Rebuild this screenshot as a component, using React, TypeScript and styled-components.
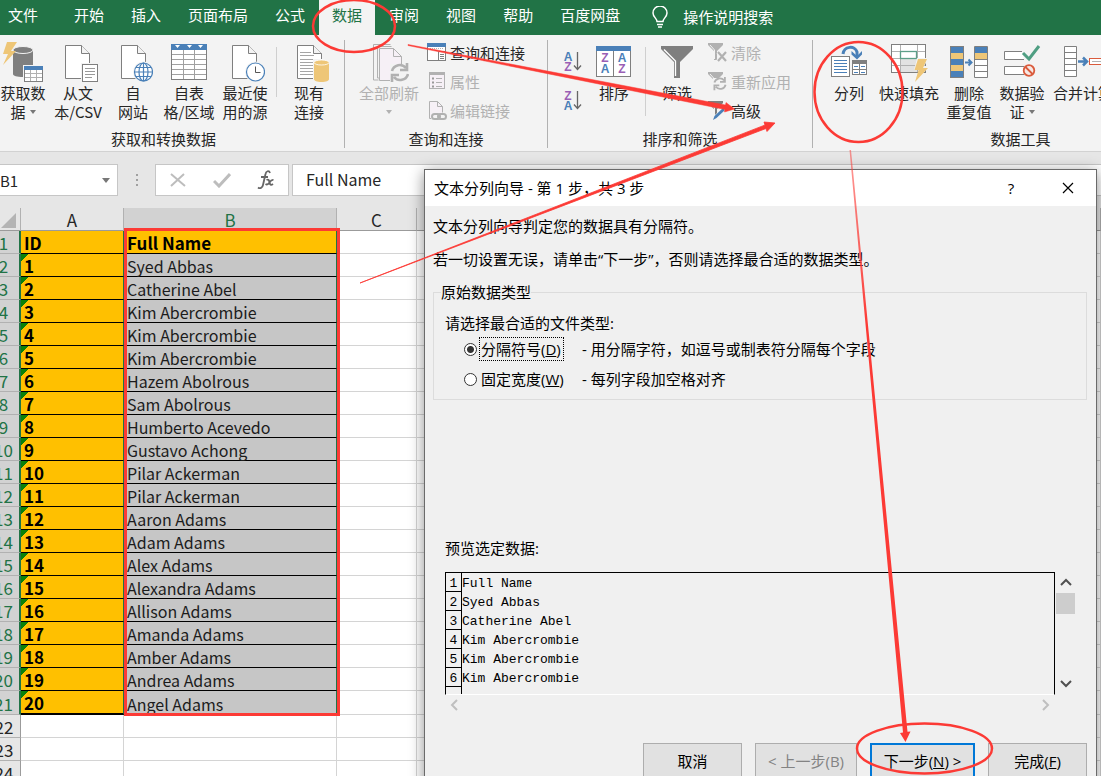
import React from "react";
import styled, { createGlobalStyle } from "styled-components";

const GREEN = "#217346";
const BLUE = "#4a80b8";
const GRAY = "#7f7f7f";
const MUTED = "#b1b1b1";
const SAND = "#eec677";
const MARK = "#fc3a35";

const Global = createGlobalStyle`
  * { box-sizing: border-box; }
  body {
    margin: 0;
    font-family: "Noto Sans CJK SC", "Noto Sans", sans-serif;
    font-size: 15px;
    color: #262626;
  }
  button, input { font: inherit; color: inherit; }
`;

const Window = styled.div`
  position: relative;
  height: 100vh;
  overflow: hidden;
  display: flex;
  flex-direction: column;
  background: #e6e6e6;
`;

/* ---------- Ribbon tabs ---------- */

const TabBar = styled.nav`
  display: flex;
  flex: none;
  gap: 1px;
  height: 35px;
  background: ${GREEN};
`;

const Tab = styled.button<{ $active?: boolean; $file?: boolean }>`
  flex: none;
  border: 0;
  padding: ${(p) => (p.$file ? "0 22px 5px 8px" : "0 13px 5px")};
  line-height: 30px;
  background: ${(p) => (p.$active ? "#f3f3f3" : "transparent")};
  color: ${(p) => (p.$active ? GREEN : "#fff")};
`;

const TellMe = styled.button`
  display: flex;
  align-items: center;
  flex: none;
  gap: 14px;
  margin-left: 17px;
  border: 0;
  padding: 0 0 2px;
  background: transparent;
  color: #fff;
`;

/* ---------- Ribbon body ---------- */

const Ribbon = styled.div`
  display: flex;
  flex: none;
  padding: 5px 0 3px;
  background: #f3f3f3;
  border-bottom: 1px solid #d2d2d2;
`;

const GroupBox = styled.section<{ $width: number; $bleed?: number }>`
  display: flex;
  flex-direction: column;
  flex: none;
  width: ${(p) => p.$width}px;
  margin-left: ${(p) => -(p.$bleed ?? 0)}px;
  border-right: 1px solid ${MUTED};
`;

const GroupItems = styled.div<{ $start: number }>`
  display: flex;
  height: 90px;
  padding-left: ${(p) => p.$start}px;
`;

const GroupTitle = styled.h2`
  margin: 0;
  font-size: 15px;
  font-weight: 400;
  line-height: 18px;
  text-align: center;
`;

const BigButton = styled.button<{ $width: number }>`
  display: flex;
  flex-direction: column;
  align-items: center;
  flex: none;
  width: ${(p) => p.$width}px;
  padding: 2px 0 0;
  border: 0;
  background: transparent;
  line-height: 19px;
  white-space: nowrap;
  &:disabled { color: ${MUTED}; }
`;

const BigIcon = styled.svg`
  flex: none;
  width: 40px;
  height: 40px;
  margin-bottom: 1px;
`;

const Line = styled.span`
  display: flex;
  align-items: center;
  gap: 4px;
  height: 19px;
`;

const Caret = styled.span`
  border: 3px solid transparent;
  border-top: 4px solid #777;
  border-bottom: 0;
  button:disabled & { border-top-color: ${MUTED}; }
`;

const Divider = styled.span<{ $tall?: boolean }>`
  flex: none;
  width: 1px;
  height: ${(p) => (p.$tall ? 69 : 50)}px;
  margin: 7px 8px 0;
  background: #cfcfcf;
`;

const Stack = styled.div<{ $start: number }>`
  display: flex;
  flex-direction: column;
  margin-left: ${(p) => p.$start}px;
`;

const SmallStack = styled(Stack)`
  margin-top: -2px;
`;

const SmallButton = styled.button`
  display: flex;
  align-items: center;
  gap: 3px;
  height: 29px;
  padding: 0;
  border: 0;
  background: transparent;
  white-space: nowrap;
  &:disabled { color: ${MUTED}; }
`;

const SmallIcon = styled.svg`
  flex: none;
  width: 20px;
  height: 20px;
`;

const OrderButton = styled.button`
  display: flex;
  align-items: center;
  height: 39px;
  padding: 4px 0 0;
  border: 0;
  background: transparent;
`;

/* ---------- Formula bar ---------- */

const FormulaBar = styled.div`
  display: flex;
  flex: none;
  height: 56px;
  padding-top: 12px;
`;

const NameBox = styled.div`
  display: flex;
  align-items: center;
  justify-content: space-between;
  width: 130px;
  height: 32px;
  margin-left: -12px;
  padding: 0 7px 0 11px;
  background: #fff;
  border: 1px solid #c6c6c6;
`;

const NameInput = styled.input`
  width: 80px;
  padding: 0;
  border: 0;
  outline: 0;
  background: transparent;
  font-size: 15px;
`;

const NameCaret = styled.span`
  border: 4px solid transparent;
  border-top: 5px solid #777;
  border-bottom: 0;
`;

const Grip = styled.span`
  width: 37px;
  height: 32px;
  display: flex;
  flex-direction: column;
  align-items: center;
  justify-content: center;
  gap: 3px;
  i { width: 2px; height: 2px; background: #a0a0a0; }
`;

const FormulaTools = styled.div`
  display: flex;
  align-items: center;
  justify-content: space-around;
  width: 134px;
  height: 32px;
  margin-right: 3px;
  background: #fff;
  border: 1px solid #c6c6c6;
`;

const ToolButton = styled.button`
  display: flex;
  padding: 0;
  border: 0;
  background: transparent;
`;

const FormulaInput = styled.input`
  flex: 1;
  height: 32px;
  padding: 0 13px 2px;
  border: 1px solid #c6c6c6;
  border-right: 0;
  outline: 0;
  background: #fff;
  font-size: 16px;
`;

/* ---------- Sheet ---------- */

const Sheet = styled.table`
  flex: none;
  width: calc(100% + 12px);
  margin-left: -12px;
  table-layout: fixed;
  border-collapse: separate;
  border-spacing: 0;
  font-size: 16px;
  line-height: 20px;
  background: #fff;
  td, th { height: 23px; padding: 2px 0 0; white-space: nowrap; }
`;

const Col = styled.col<{ $width?: number }>`
  width: ${(p) => (p.$width ? `${p.$width}px` : "auto")};
`;

const ColHead = styled.th<{ $on?: boolean }>`
  font-size: 17px;
  font-weight: 400;
  color: ${(p) => (p.$on ? GREEN : "#262626")};
  background: ${(p) => (p.$on ? "#d2d2d2" : "#e6e6e6")};
  border-right: 1px solid ${MUTED};
  border-bottom: 1px solid #9b9b9b;
`;

const RowHead = styled.th<{ $on?: boolean }>`
  font-size: 17px;
  font-weight: 400;
  color: ${(p) => (p.$on ? GREEN : "#262626")};
  background: ${(p) => (p.$on ? "#d2d2d2" : "#e6e6e6")};
  border-right: ${(p) => (p.$on ? `2px solid ${GREEN}` : "1px solid #9b9b9b")};
  border-bottom: 1px solid ${MUTED};
`;

const CornerMark = styled.span`
  display: block;
  width: 0;
  height: 0;
  margin: 0 4px 0 auto;
  border-bottom: 15px solid #b4b4b4;
  border-left: 15px solid transparent;
`;

const Cell = styled.td`
  border-right: 1px solid #d4d4d4;
  border-bottom: 1px solid #d4d4d4;
`;

const IdCell = styled(Cell)<{ $flag?: boolean; $last?: boolean }>`
  && { padding-left: 3px; }
  font-size: 17px;
  font-weight: 700;
  color: #000;
  background: ${(p) =>
    p.$flag ? "linear-gradient(135deg, #0a800a 5px, #ffc000 5px)" : "#ffc000"};
  border-right-color: ${GREEN};
  border-bottom: ${(p) => (p.$last ? 2 : 1)}px solid #000;
`;

const NameCell = styled(Cell)<{ $head?: boolean }>`
  && { padding-left: 3px; }
  font-size: ${(p) => (p.$head ? 17 : 16)}px;
  font-weight: ${(p) => (p.$head ? 700 : 400)};
  color: ${(p) => (p.$head ? "#000" : "#1c1c1c")};
  background: ${(p) => (p.$head ? "#ffc000" : "#c6c6c6")};
  border-right-color: ${GREEN};
  border-bottom-color: #000;
`;

/* ---------- Dialog ---------- */

const Dialog = styled.form`
  position: absolute;
  top: 169px;
  left: 424px;
  right: 4px;
  height: 640px;
  border: 1px solid #6a6a6a;
  background: #f0f0f0;
  color: #000;
  font-family: "Open Sans", "Noto Sans CJK SC", sans-serif;
  line-height: 22px;
  box-shadow: 0 3px 14px rgba(0, 0, 0, 0.45);
`;

const TitleBar = styled.header`
  display: flex;
  align-items: center;
  height: 36px;
  padding: 0 20px 0 9px;
  background: #fff;
`;

const DialogTitle = styled.h1`
  flex: 1;
  margin: 0;
  font-size: 15px;
  font-weight: 400;
`;

const TitleButton = styled.button`
  display: flex;
  align-items: center;
  justify-content: center;
  width: 16px;
  height: 20px;
  margin-left: 41px;
  padding: 0;
  border: 0;
  background: transparent;
`;

const DialogBody = styled.div`
  display: flex;
  flex-direction: column;
  padding: 9px 9px 0 8px;
`;

const Text = styled.p`
  margin: 0 0 11px;
`;

const TypeBox = styled.fieldset`
  margin: 0;
  padding: 9px 11px 5px;
  border: 1px solid #dcdcdc;
`;

const Legend = styled.legend`
  margin-left: -4px;
  padding: 0;
`;

const Question = styled.p`
  margin: 0;
`;

const Choice = styled.div`
  display: flex;
  align-items: center;
  height: 30px;
  padding-left: 19px;
`;

const Radio = styled.input`
  appearance: none;
  width: 13px;
  height: 13px;
  margin: 0 2px 0 0;
  border: 1px solid #333;
  border-radius: 50%;
  background: #fff;
  &:checked { background: radial-gradient(circle, #333 3px, #fff 4px); }
`;

const ChoiceLabel = styled.label<{ $focus?: boolean }>`
  width: 85px;
  margin-right: 18px;
  padding: 0 1px;
  border: 1px dotted ${(p) => (p.$focus ? "#000" : "transparent")};
  white-space: nowrap;
`;

const PreviewLabel = styled.h2`
  margin: 137px 0 13px 12px;
  font-size: 15px;
  font-weight: 400;
`;

const PreviewArea = styled.div`
  display: grid;
  grid-template-columns: 1fr 20px;
  grid-template-rows: 123px 19px;
  margin: 0 12px;
`;

const PreviewBox = styled.div`
  overflow: hidden;
  border: 1px solid #000;
  border-bottom-color: #fff;
`;

const PreviewTable = styled.table`
  border-collapse: separate;
  border-spacing: 0;
  font-family: "Liberation Mono", "Noto Sans CJK SC", monospace;
  font-size: 13px;
  td, th { height: 19px; font-weight: 400; white-space: pre; vertical-align: top; }
  td { padding: 3px 0 0; line-height: 16px; }
  th {
    width: 16px;
    padding: 4px 0 0;
    line-height: 14px;
    border-right: 1px solid #000;
    border-bottom: 1px solid #000;
  }
`;

const VerticalBar = styled.div`
  display: flex;
  flex-direction: column;
  align-items: center;
  padding: 1px 0 2px 1px;
`;

const HorizontalBar = styled.div`
  display: flex;
  justify-content: space-between;
`;

const ArrowButton = styled.button`
  display: flex;
  align-items: center;
  justify-content: center;
  width: 20px;
  height: 20px;
  padding: 0;
  border: 0;
  background: transparent;
`;

const Thumb = styled.span`
  width: 19px;
  height: 21px;
  background: #cdcdcd;
`;

const Spacer = styled.span`
  flex: 1;
`;

const Actions = styled.div`
  display: flex;
  justify-content: flex-end;
  gap: 13px;
  margin-top: 29px;
`;

const ActionButton = styled.button<{ $width: number; $primary?: boolean }>`
  width: ${(p) => p.$width}px;
  height: 36px;
  padding: 0;
  border: ${(p) => (p.$primary ? "2px solid #0078d7" : "1px solid #adadad")};
  background: #e1e1e1;
  white-space: nowrap;
  &:disabled { color: #838383; }
`;

const Markup = styled.svg`
  position: absolute;
  inset: 0;
  width: 100%;
  height: 100%;
  pointer-events: none;
`;

/* ---------- Icon parts ---------- */

const Page = ({ x, fill = "#fff", stroke = GRAY }: { x: number; fill?: string; stroke?: string }) => (
  <g fill={fill} stroke={stroke}>
    <path d={`M${x + 0.5} 3.5h16l8 8v25h-24z`} />
    <path d={`M${x + 16.5} 3.5v8h8`} fill="#f3f3f3" />
  </g>
);

const GetDataIcon = () => (
  <BigIcon viewBox="0 0 40 40" aria-hidden="true">
    <path d="M10 7v25c0 2 4 3 10 3s10-1 10-3V7z" fill={GRAY} />
    <ellipse cx="20" cy="8" rx="10" ry="3.5" fill={GRAY} stroke="#f3f3f3" />
    <path d="M4 0h10L8 9h5L0 23l5-11H0z" fill={SAND} />
    <rect x="20" y="23" width="20" height="17" fill="#f3f3f3" />
    <rect x="21.500" y="24.500" width="18" height="15" fill="#fff" stroke={GRAY} />
    <path d="M21 24h19v4H21z" fill={BLUE} />
    <path d="M27.500 28v11M33.500 28v11M22 31.500h17M22 35.500h17" stroke={MUTED} />
  </BigIcon>
);

const TextFileIcon = () => (
  <BigIcon viewBox="0 0 40 40" aria-hidden="true">
    <Page x={7} />
    <rect x="23" y="21" width="17" height="19" fill="#f3f3f3" />
    <rect x="24.500" y="22.500" width="15" height="17" fill="#fff" stroke={GRAY} />
    <path d="M27 26.500h10M27 29.500h10M27 32.500h10M27 35.500h7" stroke="#999" />
  </BigIcon>
);

const WebIcon = () => (
  <BigIcon viewBox="0 0 40 40" aria-hidden="true">
    <Page x={8} />
    <circle cx="30.500" cy="30" r="10.500" fill="#f3f3f3" />
    <g fill="none" stroke={BLUE} strokeWidth="1.200">
      <circle cx="30.500" cy="30" r="9" fill="#fff" />
      <ellipse cx="30.500" cy="30" rx="4.500" ry="9" />
      <path d="M30.500 21v18M21.500 30h18M23 25.500h15M23 34.500h15" />
    </g>
  </BigIcon>
);

const TableIcon = () => (
  <BigIcon viewBox="0 0 40 40" aria-hidden="true">
    <rect x="2.500" y="2.500" width="35" height="35" fill="#fff" stroke={GRAY} />
    <path d="M2 2h36v6H2z" fill={BLUE} />
    <path d="M6 3h5l-2.500 3zM18 3h5l-2.500 3zM29 3h5l-2.500 3z" fill="#fff" />
    <path d="M14.500 8v29M25.500 8v29M3 12.500h34M3 17.500h34M3 22.500h34M3 27.500h34M3 32.500h34" stroke="#a0a0a0" />
  </BigIcon>
);

const RecentIcon = () => (
  <BigIcon viewBox="0 0 40 40" aria-hidden="true">
    <Page x={7} />
    <circle cx="30.500" cy="30" r="10.500" fill="#f3f3f3" />
    <circle cx="30.500" cy="30" r="9" fill="#fff" stroke={BLUE} strokeWidth="1.200" />
    <path d="M30.500 24.500v6h5" fill="none" stroke="#555" />
  </BigIcon>
);

const ExistingIcon = () => (
  <BigIcon viewBox="0 0 40 40" aria-hidden="true">
    <Page x={8} />
    <path d="M11 10.500h11M11 13.500h14M11 17.500h18M11 20.500h14M11 23.500h13M11 26.500h13M11 29.500h13M11 32.500h13" stroke="#a5a5a5" />
    <path d="M24 17h17v23H24z" fill="#f3f3f3" />
    <path d="M25 20v17c0 2 3 3 7.500 3s7.500-1 7.500-3V20z" fill={SAND} />
    <ellipse cx="32.500" cy="20.500" rx="7.500" ry="2.500" fill={SAND} stroke="#fff" strokeWidth="0.800" />
  </BigIcon>
);

const Refresh = () => (
  <g fill="none" stroke={MUTED} strokeWidth="2.600">
    <path d="M2 8a8 8 0 0 1 14-3M17 0v7h-7M18 11a8 8 0 0 1-14 3M2 19v-7h7" />
  </g>
);

const RefreshAllIcon = () => (
  <BigIcon viewBox="0 0 40 40" aria-hidden="true">
    <path d="M9.500 38H4.500V2.500h17M13 36H8.500V4.500h14" fill="none" stroke={MUTED} />
    <path d="M10.500 6.500h14l8 8v24h-22z" fill="#f6f0f6" stroke={MUTED} />
    <path d="M24.500 6.500v8h8" fill="none" stroke={MUTED} />
    <rect x="21" y="22" width="19" height="18" fill="#f3f3f3" />
    <g transform="translate(21 21)"><Refresh /></g>
  </BigIcon>
);

const QueriesIcon = () => (
  <SmallIcon viewBox="0 0 20 20" aria-hidden="true">
    <rect x="0.500" y="0.500" width="18" height="17" fill="#fff" stroke={GRAY} />
    <path d="M0 0h19v4H0z" fill={BLUE} />
    <path d="M3 5.500h14" stroke={MUTED} strokeDasharray="1 1" />
    <path d="M11.500 17V8.500H19M13 11.500h4M13 13.500h4M13 15.500h4" fill="none" stroke={GRAY} />
  </SmallIcon>
);

const PropertiesIcon = () => (
  <SmallIcon viewBox="0 0 20 20" aria-hidden="true">
    <rect x="2.500" y="0.500" width="15" height="16" fill="#f6f0f6" stroke={MUTED} />
    <path d="M2 0h16v3H2z" fill={MUTED} />
    <path d="M9 6.500h6M9 10.500h6M9 14.500h6" stroke={MUTED} />
    <path d="M5 6.500h2M5 10.500h2M5 14.500h2" stroke="#999" strokeWidth="2" />
  </SmallIcon>
);

const LinksIcon = () => (
  <SmallIcon viewBox="0 0 20 20" aria-hidden="true">
    <path d="M4 17.500H2.500V0.500h8l5 5v6" fill="#f6f0f6" stroke={MUTED} />
    <path d="M10.500 0.500v5h5" fill="none" stroke={MUTED} />
    <g fill="none" stroke={MUTED} strokeWidth="2">
      <rect x="5" y="13" width="8" height="5" rx="2.500" />
      <rect x="11" y="13" width="8" height="5" rx="2.500" />
    </g>
  </SmallIcon>
);

const Letter = styled.text`
  font-family: "Liberation Sans", sans-serif;
  font-size: 12px;
  font-weight: 700;
  text-anchor: middle;
`;

const OrderIcon = ({ first, second }: { first: string; second: string }) => (
  <svg width="22" height="24" viewBox="0 0 22 24" aria-hidden="true">
    <Letter x="6" y="11" fill={first === "A" ? BLUE : "#9a5fb5"}>{first}</Letter>
    <Letter x="6" y="21" fill={second === "A" ? BLUE : "#9a5fb5"}>{second}</Letter>
    <path d="M15.500 2v17M12 15.500l3.500 4 3.500-4" fill="none" stroke="#666" strokeWidth="1.300" />
  </svg>
);

const SortIcon = () => (
  <BigIcon viewBox="0 0 40 40" aria-hidden="true">
    <rect x="2.500" y="4.500" width="34" height="30" fill="#fff" stroke={GRAY} />
    <path d="M2 4h35v5H2z" fill={BLUE} />
    <path d="M19.500 9v25" stroke={GRAY} />
    <Letter x="11" y="20" fill="#9a5fb5">Z</Letter>
    <Letter x="11" y="31" fill={BLUE}>A</Letter>
    <Letter x="28" y="20" fill={BLUE}>A</Letter>
    <Letter x="28" y="31" fill="#9a5fb5">Z</Letter>
  </BigIcon>
);

const FilterIcon = () => (
  <BigIcon viewBox="0 0 40 40" aria-hidden="true">
    <path d="M4 4h32v3L23 20v16h-6V20L4 7z" fill={GRAY} />
    <path d="M7 7.500L18.500 19v15" fill="none" stroke="#fff" strokeWidth="1.300" />
  </BigIcon>
);

const SmallFunnel = ({ color }: { color: string }) => (
  <>
    <path d="M0 0h15v2L9 8v9H6V8L0 2z" fill={color} />
    <path d="M2 2l4.500 5v9" fill="none" stroke="#f3f3f3" />
  </>
);

const ClearIcon = () => (
  <SmallIcon viewBox="0 0 20 20" aria-hidden="true">
    <SmallFunnel color={MUTED} />
    <path d="M10 9l8 9M18 9l-8 9" stroke="#f3f3f3" strokeWidth="4" />
    <path d="M10 9l8 9M18 9l-8 9" stroke={MUTED} strokeWidth="2.200" />
  </SmallIcon>
);

const ReapplyIcon = () => (
  <SmallIcon viewBox="0 0 20 20" aria-hidden="true">
    <SmallFunnel color={MUTED} />
    <rect x="5" y="6" width="15" height="13" fill="#f3f3f3" />
    <g transform="translate(5 5) scale(.7)"><Refresh /></g>
  </SmallIcon>
);

const AdvancedIcon = () => (
  <SmallIcon viewBox="0 0 20 20" aria-hidden="true">
    <SmallFunnel color={GRAY} />
    <path d="M5 19l2-5 8-8 3 3-8 8z" fill="#f3f3f3" />
    <path d="M5 19l1.500-4L15 7l2 2-8.500 8z" fill={BLUE} />
  </SmallIcon>
);

const SplitIcon = () => (
  <BigIcon viewBox="0 0 40 40" aria-hidden="true">
    <rect x="2.500" y="14.500" width="18" height="20" fill="#fff" stroke={GRAY} />
    <path d="M5 18.500h13M5 21.500h13M5 24.500h13M5 27.500h13M5 30.500h13" stroke={BLUE} />
    <rect x="23.500" y="18.500" width="14" height="14" fill="#fff" stroke={GRAY} />
    <path d="M23 18h15v4H23z" fill={GRAY} />
    <path d="M30.500 22v10M24 27.500h13" stroke={GRAY} />
    <path d="M25 24.500h4M32 24.500h4M25 30.500h4M32 30.500h4" stroke={BLUE} />
    <path d="M14 12c1-8 12-9 14-2v4" fill="none" stroke={BLUE} strokeWidth="3" />
    <path d="M22.500 9l5.500 5 5-5v3.500L28 17.500l-5.500-5z" fill={BLUE} />
  </BigIcon>
);

const FlashFillIcon = () => (
  <BigIcon viewBox="0 0 40 40" aria-hidden="true">
    <rect x="2.500" y="2.500" width="34" height="28" fill="#fff" stroke={GRAY} />
    <path d="M11 17h17v13H11z" fill="#e2e2e2" />
    <path d="M11.500 3v27M28.500 3v27M3 9.500h33M3 16.500h33M3 23.500h33" stroke={MUTED} />
    <rect x="11.500" y="9.500" width="16" height="7" fill="#fff" stroke="#5d9f89" strokeWidth="1.300" />
    <path d="M28 16h12l-5 8h5L26 40l4-12h-5z" fill="#f3f3f3" />
    <path d="M29 17h9l-4 9h5L26 40l3.500-12h-4z" fill={SAND} />
  </BigIcon>
);

const DuplicatesIcon = () => (
  <BigIcon viewBox="0 0 40 40" aria-hidden="true">
    <rect x="1.500" y="4.500" width="13" height="31" fill={BLUE} />
    <path d="M2 11h12v6H2zM2 23h12v6H2z" fill={SAND} />
    <rect x="1.500" y="4.500" width="13" height="31" fill="none" stroke={GRAY} />
    <rect x="25.500" y="4.500" width="13" height="31" fill="#fff" />
    <path d="M26 5h12v6H26z" fill={BLUE} />
    <path d="M26 11h12v6H26z" fill={SAND} />
    <path d="M25.500 4.500h13v31h-13zM25.500 17.500h13M25.500 23.500h13M25.500 29.500h13" fill="none" stroke={GRAY} />
    <path d="M16 20.500h6M19.500 17.500l3 3-3 3" fill="none" stroke={BLUE} strokeWidth="2" />
  </BigIcon>
);

const ValidationIcon = () => (
  <BigIcon viewBox="0 0 40 40" aria-hidden="true">
    <path d="M20 9.500H2.500v8H22M22 24.500H2.500v8H22" fill="#fff" stroke={GRAY} />
    <path d="M21 11l6 6L37 4" fill="none" stroke="#4f9e82" strokeWidth="3" />
    <circle cx="27" cy="28.500" r="5.300" fill="#f6e8e4" stroke="#da5b3c" strokeWidth="1.800" />
    <path d="M23.500 25l7 7" stroke="#da5b3c" strokeWidth="1.800" />
  </BigIcon>
);

const ConsolidateIcon = () => (
  <BigIcon viewBox="0 0 40 40" aria-hidden="true">
    <path d="M1.500 4.500h12v30h-12zM1.500 10.500h12M1.500 16.500h12M1.500 22.500h12M1.500 28.500h12" fill="#fff" stroke={GRAY} />
    <path d="M15 19.500h8M20 15.500l4 4-4 4" fill="none" stroke={BLUE} strokeWidth="2.500" />
    <rect x="26.500" y="16.500" width="13" height="6" fill="#fff" stroke="#da5b3c" />
    <path d="M29 19.500h9" stroke={MUTED} />
  </BigIcon>
);

/* ---------- Data ---------- */

const tabs = ["开始", "插入", "页面布局", "公式", "数据", "审阅", "视图", "帮助", "百度网盘"];

const names = [
  "Syed Abbas", "Catherine Abel", "Kim Abercrombie", "Kim Abercrombie", "Kim Abercrombie",
  "Hazem Abolrous", "Sam Abolrous", "Humberto Acevedo", "Gustavo Achong", "Pilar Ackerman",
  "Pilar Ackerman", "Aaron Adams", "Adam Adams", "Alex Adams", "Alexandra Adams",
  "Allison Adams", "Amanda Adams", "Amber Adams", "Andrea Adams", "Angel Adams",
];

const preview = ["Full Name", ...names.slice(0, 5), ""];

type BigProps = { width: number; icon: React.ReactNode; lines: string[]; menu?: boolean; disabled?: boolean };

const Big = ({ width, icon, lines, menu, disabled }: BigProps) => (
  <BigButton type="button" $width={width} disabled={disabled}>
    {icon}
    {lines.map((line, i) => (
      <Line key={i}>
        {line}
        {menu && i === lines.length - 1 && <Caret />}
      </Line>
    ))}
  </BigButton>
);

const Chevron = ({ d, color = "#505050" }: { d: string; color?: string }) => (
  <svg width="12" height="12" viewBox="0 0 12 12" aria-hidden="true">
    <path d={d} fill="none" stroke={color} strokeWidth="2" />
  </svg>
);

export default function App() {
  return (
    <Window>
      <Global />
      <TabBar>
        <Tab type="button" $file>文件</Tab>
        {tabs.map((tab) => (
          <Tab key={tab} type="button" $active={tab === "数据"}>{tab}</Tab>
        ))}
        <TellMe type="button">
          <svg width="18" height="22" viewBox="0 0 18 22" aria-hidden="true">
            <path d="M6 15.500c0-3-4-4.500-4-8.500a6.800 6.800 0 0 1 14 0c0 4-4 5.500-4 8.500zM6 18.500h6M7 21h4" fill="none" stroke="#fff" strokeWidth="1.500" />
          </svg>
          操作说明搜索
        </TellMe>
      </TabBar>

      <Ribbon>
        <GroupBox $width={362} $bleed={17}>
          <GroupItems $start={17}>
            <Big width={46} icon={<GetDataIcon />} lines={["获取数", "据"]} menu />
            <Big width={64} icon={<TextFileIcon />} lines={["从文", "本/CSV"]} />
            <Big width={46} icon={<WebIcon />} lines={["自", "网站"]} />
            <Big width={66} icon={<TableIcon />} lines={["自表", "格/区域"]} />
            <Big width={46} icon={<RecentIcon />} lines={["最近使", "用的源"]} />
            <Divider />
            <Big width={48} icon={<ExistingIcon />} lines={["现有", "连接"]} />
          </GroupItems>
          <GroupTitle>获取和转换数据</GroupTitle>
        </GroupBox>

        <GroupBox $width={203}>
          <GroupItems $start={12}>
            <Big width={64} icon={<RefreshAllIcon />} lines={["全部刷新", ""]} menu disabled />
            <SmallStack $start={6}>
              <SmallButton type="button"><QueriesIcon />查询和连接</SmallButton>
              <SmallButton type="button" disabled><PropertiesIcon />属性</SmallButton>
              <SmallButton type="button" disabled><LinksIcon />编辑链接</SmallButton>
            </SmallStack>
          </GroupItems>
          <GroupTitle>查询和连接</GroupTitle>
        </GroupBox>

        <GroupBox $width={265}>
          <GroupItems $start={0}>
            <Stack $start={14}>
              <OrderButton type="button" aria-label="升序"><OrderIcon first="A" second="Z" /></OrderButton>
              <OrderButton type="button" aria-label="降序"><OrderIcon first="Z" second="A" /></OrderButton>
            </Stack>
            <Stack $start={7}>
              <Big width={46} icon={<SortIcon />} lines={["排序"]} />
            </Stack>
            <Divider $tall />
            <Big width={46} icon={<FilterIcon />} lines={["筛选"]} />
            <SmallStack $start={8}>
              <SmallButton type="button" disabled><ClearIcon />清除</SmallButton>
              <SmallButton type="button" disabled><ReapplyIcon />重新应用</SmallButton>
              <SmallButton type="button"><AdvancedIcon />高级</SmallButton>
            </SmallStack>
          </GroupItems>
          <GroupTitle>排序和筛选</GroupTitle>
        </GroupBox>

        <GroupBox $width={416}>
          <GroupItems $start={12}>
            <Big width={48} icon={<SplitIcon />} lines={["分列"]} />
            <Big width={72} icon={<FlashFillIcon />} lines={["快速填充"]} />
            <Big width={48} icon={<DuplicatesIcon />} lines={["删除", "重复值"]} />
            <Big width={58} icon={<ValidationIcon />} lines={["数据验", "证"]} menu />
            <Big width={64} icon={<ConsolidateIcon />} lines={["合并计算"]} />
          </GroupItems>
          <GroupTitle>数据工具</GroupTitle>
        </GroupBox>
      </Ribbon>

      <FormulaBar>
        <NameBox>
          <NameInput aria-label="名称框" defaultValue="B1" />
          <NameCaret />
        </NameBox>
        <Grip><i /><i /><i /></Grip>
        <FormulaTools>
          <ToolButton type="button" aria-label="取消">
            <svg width="18" height="16" viewBox="0 0 18 16"><path d="M2 2l14 12M15 2L2 14" stroke="#bdbdbd" strokeWidth="2" /></svg>
          </ToolButton>
          <ToolButton type="button" aria-label="输入">
            <svg width="18" height="16" viewBox="0 0 18 16"><path d="M1 9l5 5L17 2" fill="none" stroke="#bdbdbd" strokeWidth="3" /></svg>
          </ToolButton>
          <ToolButton type="button" aria-label="插入函数">
            <svg width="18" height="20" viewBox="0 0 18 20" fill="none" stroke="#666" strokeWidth="1.800">
              <path d="M13 3c-1-3-4-2-4.500 1L6 15c-.6 3-3 4-5 2.500M4 7h7" />
              <path d="M9.500 10c2-1 2.500 0 3 2.500s1.500 3 3.500 1.500M16.500 10c-2-.5-3 1-4 2.500S10 15 8.500 14" />
            </svg>
          </ToolButton>
        </FormulaTools>
        <FormulaInput aria-label="编辑栏" defaultValue="Full Name" />
      </FormulaBar>

      <Sheet>
        <colgroup>
          <Col $width={33} /><Col $width={103} /><Col $width={213} /><Col $width={80} /><Col />
        </colgroup>
        <thead>
          <tr>
            <ColHead aria-label="全选"><CornerMark /></ColHead>
            <ColHead>A</ColHead>
            <ColHead $on>B</ColHead>
            <ColHead>C</ColHead>
            <ColHead aria-label="D" />
          </tr>
        </thead>
        <tbody>
          <tr>
            <RowHead $on>1</RowHead>
            <IdCell>ID</IdCell>
            <NameCell $head>Full Name</NameCell>
            <Cell /><Cell />
          </tr>
          {names.map((name, i) => (
            <tr key={i}>
              <RowHead $on>{i + 2}</RowHead>
              <IdCell $flag $last={i === names.length - 1}>{i + 1}</IdCell>
              <NameCell>{name}</NameCell>
              <Cell /><Cell />
            </tr>
          ))}
          {[22, 23, 24].map((n) => (
            <tr key={n}>
              <RowHead>{n}</RowHead>
              <Cell /><Cell /><Cell /><Cell />
            </tr>
          ))}
        </tbody>
      </Sheet>

      <Dialog role="dialog" aria-labelledby="wizard-title" onSubmit={(e) => e.preventDefault()}>
        <TitleBar>
          <DialogTitle id="wizard-title">文本分列向导 - 第 1 步，共 3 步</DialogTitle>
          <TitleButton type="button">?</TitleButton>
          <TitleButton type="button" aria-label="关闭">
            <svg width="12" height="12" viewBox="0 0 12 12"><path d="M1 1l10 10M11 1L1 11" stroke="#000" strokeWidth="1.200" /></svg>
          </TitleButton>
        </TitleBar>
        <DialogBody>
          <Text>文本分列向导判定您的数据具有分隔符。</Text>
          <Text>若一切设置无误，请单击“下一步”，否则请选择最合适的数据类型。</Text>
          <TypeBox>
            <Legend>原始数据类型</Legend>
            <Question>请选择最合适的文件类型:</Question>
            <Choice>
              <Radio type="radio" name="kind" id="delimited" defaultChecked />
              <ChoiceLabel htmlFor="delimited" $focus>分隔符号(<u>D</u>)</ChoiceLabel>
              <span>- 用分隔字符，如逗号或制表符分隔每个字段</span>
            </Choice>
            <Choice>
              <Radio type="radio" name="kind" id="fixed" />
              <ChoiceLabel htmlFor="fixed">固定宽度(<u>W</u>)</ChoiceLabel>
              <span>- 每列字段加空格对齐</span>
            </Choice>
          </TypeBox>
          <PreviewLabel>预览选定数据:</PreviewLabel>
          <PreviewArea>
            <PreviewBox>
              <PreviewTable>
                <tbody>
                  {preview.map((text, i) => (
                    <tr key={i}>
                      <th>{text && i + 1}</th>
                      <td>{text}</td>
                    </tr>
                  ))}
                </tbody>
              </PreviewTable>
            </PreviewBox>
            <VerticalBar>
              <ArrowButton type="button" aria-label="向上"><Chevron d="M1 8l5-5 5 5" /></ArrowButton>
              <Thumb />
              <Spacer />
              <ArrowButton type="button" aria-label="向下"><Chevron d="M1 4l5 5 5-5" /></ArrowButton>
            </VerticalBar>
            <HorizontalBar>
              <ArrowButton type="button" aria-label="向左"><Chevron d="M8 1L3 6l5 5" color="#bfbfbf" /></ArrowButton>
              <ArrowButton type="button" aria-label="向右"><Chevron d="M4 1l5 5-5 5" color="#bfbfbf" /></ArrowButton>
            </HorizontalBar>
          </PreviewArea>
          <Actions>
            <ActionButton type="button" $width={99}>取消</ActionButton>
            <ActionButton type="button" $width={102} disabled>&lt; 上一步(B)</ActionButton>
            <ActionButton type="submit" $width={105} $primary>下一步(<u>N</u>) &gt;</ActionButton>
            <ActionButton type="button" $width={99}>完成(<u>F</u>)</ActionButton>
          </Actions>
        </DialogBody>
      </Dialog>

      <Markup aria-hidden="true">
        <defs>
          <linearGradient id="fade" x1="0" y1="0" x2="0" y2="1">
            <stop offset="0" stopColor={MARK} stopOpacity="0.500" />
            <stop offset="0.300" stopColor={MARK} />
          </linearGradient>
        </defs>
        <g fill="none" stroke={MARK} strokeWidth="2.500">
          <ellipse cx="354" cy="26" rx="41" ry="26" />
          <ellipse cx="858.500" cy="92" rx="44" ry="50" />
          <ellipse cx="924.500" cy="748.500" rx="67.500" ry="25" />
          <rect x="125.500" y="229.500" width="213" height="485" strokeWidth="3" />
        </g>
        <g fill={MARK}>
          <path d="M408 44.500L725.500 105l.5-2.500 8.500 6.500-10 3 .5-2.500L408 45.500z" stroke={MARK} strokeWidth="0.500" />
          <path d="M360 283l405-158-1-3 11 1-8 8.500-1-3z" stroke={MARK} strokeWidth="0.800" />
          <path d="M849.500 150L903 732.500l-3 .5 5.500 9 5-10.500-3 .2L851 150z" fill="url(#fade)" />
        </g>
      </Markup>
    </Window>
  );
}
